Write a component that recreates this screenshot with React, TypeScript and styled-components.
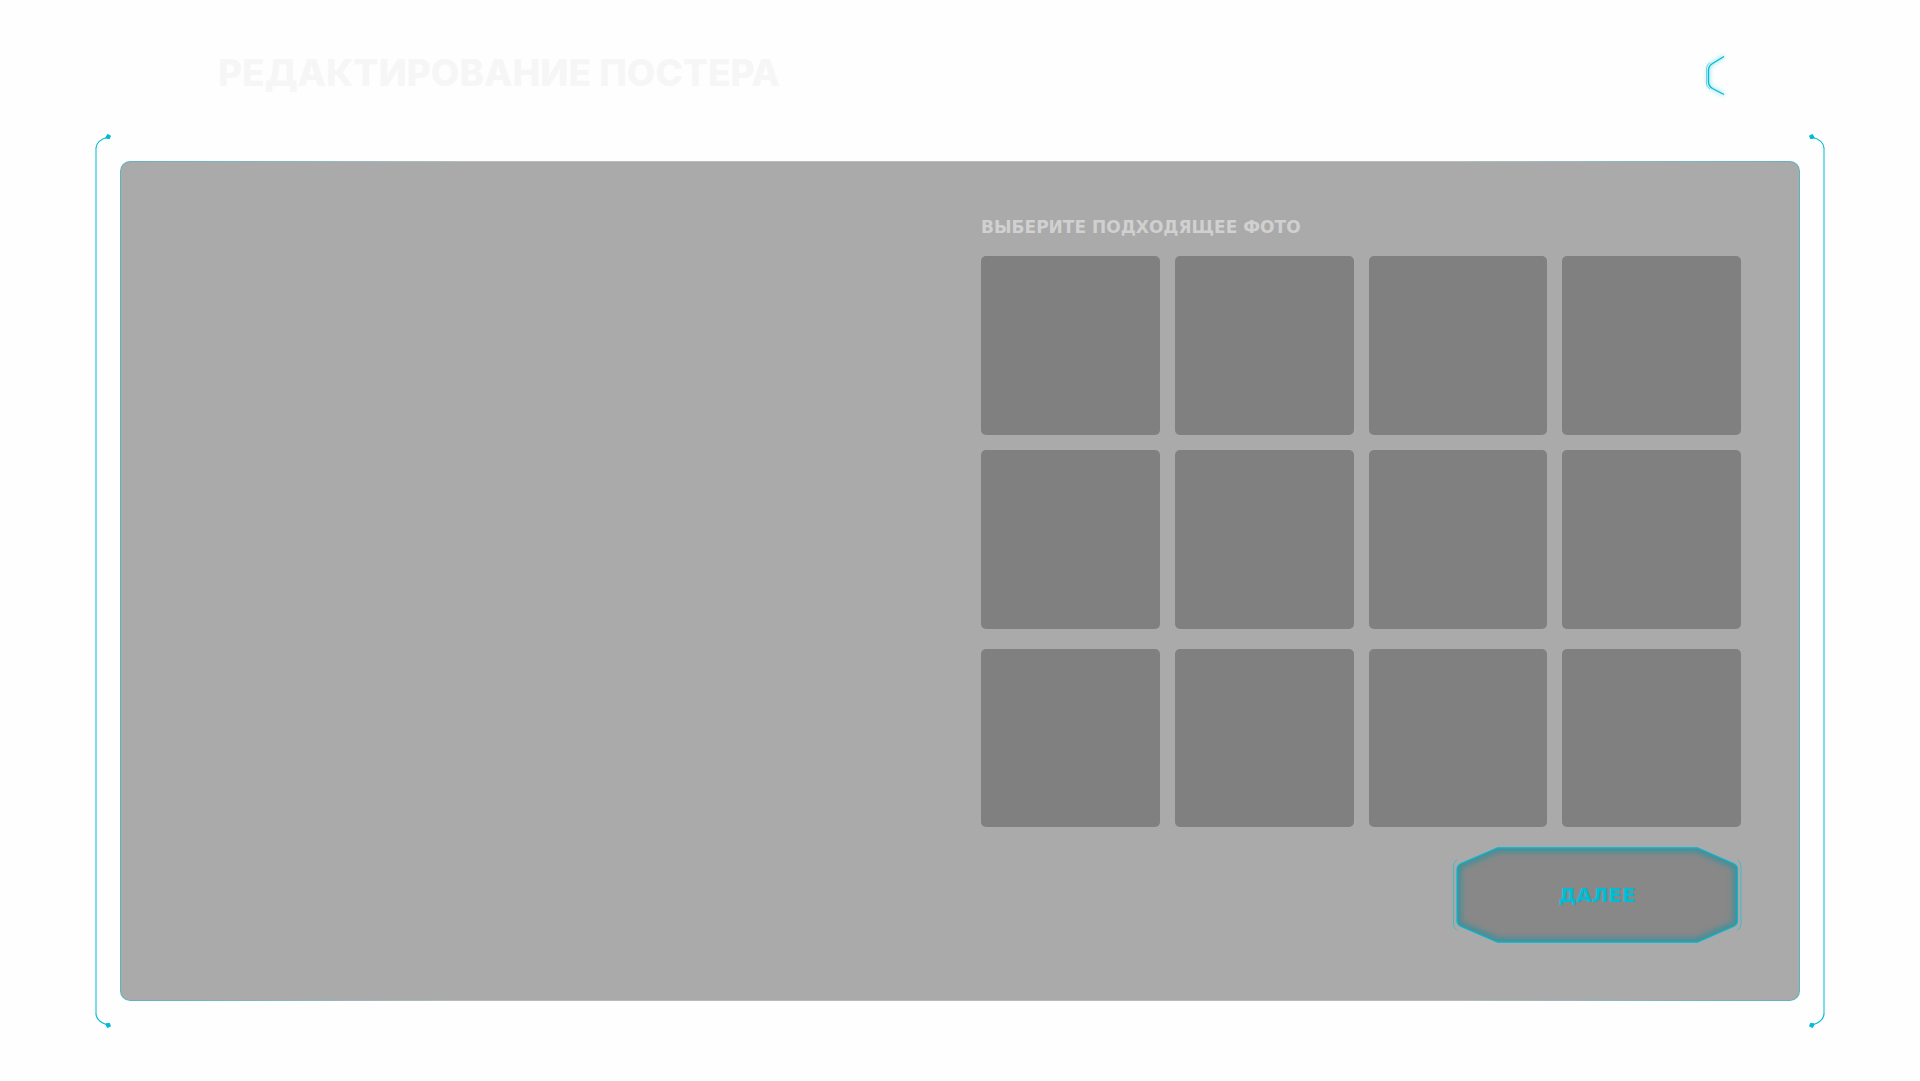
import React from "react";
import styled, { createGlobalStyle } from "styled-components";

const cyan = "#00bcd4";

const GlobalStyle = createGlobalStyle`
  *, *::before, *::after { box-sizing: border-box; }
  body {
    margin: 0;
    background: #fefefe;
    font-family: Inter, "Noto Sans", sans-serif;
  }
`;

const Page = styled.div`
  display: flex;
  flex-direction: column;
  min-height: 100vh;
  padding: 48px 95px 52px;
`;

const Header = styled.header`
  display: flex;
  align-items: flex-start;
  justify-content: space-between;
  height: 56px;
  padding: 0 93px 0 123px;
`;

const Title = styled.h1`
  margin: 0;
  color: #f6f6f6;
  font-size: 37px;
  font-weight: 800;
  line-height: 50px;
`;

const BackButton = styled.button`
  display: flex;
  width: 28px;
  height: 56px;
  padding: 0;
  border: 0;
  background: none;
  cursor: pointer;
  svg { overflow: visible; }
`;

const Frame = styled.main`
  display: flex;
  gap: 8px;
  margin-top: 29px;
`;

const BracketColumn = styled.div<{ $right?: boolean }>`
  display: flex;
  flex: none;
  flex-direction: column;
  width: 17px;
  transform: ${(p) => (p.$right ? "scaleX(-1)" : "none")};
`;

const BracketLine = styled.div`
  flex: 1;
  width: 2px;
  background: ${cyan};
  opacity: 0.5;
`;

const Cap = styled.svg<{ $flip?: boolean }>`
  display: block;
  flex: none;
  transform: ${(p) => (p.$flip ? "scaleY(-1)" : "none")};
`;

const Panel = styled.div`
  display: flex;
  flex: 1;
  justify-content: flex-end;
  margin: 28px 0;
  padding: 56px 58px 57px;
  border: 1px solid transparent;
  border-radius: 10px;
  background:
    linear-gradient(#aaa, #aaa) padding-box,
    linear-gradient(90deg, #5db3bf, #b4bcbc 20%, #b4bcbc 80%, #5db3bf) border-box;
`;

const Poster = styled.section`
  flex: 1;
`;

const Picker = styled.section`
  display: flex;
  flex-direction: column;
  gap: 20px;
  width: 760px;
  max-width: 100%;
`;

const Caption = styled.h2`
  margin: 0;
  color: #d0d0d0;
  font-family: "DejaVu Sans", sans-serif;
  font-size: 17px;
  font-weight: 700;
  line-height: 18px;
`;

const PhotoGrid = styled.div`
  display: grid;
  grid-template-columns: repeat(4, 1fr);
  gap: 15px;
`;

const Photo = styled.button`
  aspect-ratio: 1;
  padding: 0;
  border: 0;
  border-radius: 5px;
  background: #808080;
  cursor: pointer;
`;

const NextButton = styled.button`
  display: grid;
  align-self: flex-end;
  place-items: center;
  width: 288px;
  height: 96px;
  padding: 0;
  border: 0;
  background: none;
  color: ${cyan};
  font-family: "DejaVu Sans", sans-serif;
  font-size: 20px;
  font-weight: 700;
  line-height: 24px;
  cursor: pointer;
  > * { grid-area: 1 / 1; }
  > span { z-index: 1; }
  svg { overflow: visible; }
`;

function BracketCap({ flip }: { flip?: boolean }) {
  return (
    <Cap $flip={flip} width="17" height="16" viewBox="0 0 17 16" aria-hidden="true">
      <path d="M1 16V15C1.500 9 6 6 13 4" fill="none" stroke={cyan} strokeWidth="1.200" />
      <path d="m12.500 1.500 2.900 1.300-.9 2.900-3.700-.6z" fill={cyan} stroke={cyan} />
    </Cap>
  );
}

function Bracket({ right }: { right?: boolean }) {
  return (
    <BracketColumn $right={right}>
      <BracketCap />
      <BracketLine />
      <BracketCap flip />
    </BracketColumn>
  );
}

const hexagon =
  "M44.500.8H244.500L280.500 16.500Q284.500 18.500 284.500 22V74Q284.500 77.500 280.500 79.500L244.500 95.200H44.500L8 79.500Q4 77.500 4 74V22Q4 18.500 8 16.500Z";

function NextShape() {
  return (
    <svg width="288" height="96" viewBox="0 0 288 96" aria-hidden="true">
      <defs>
        <clipPath id="next-clip"><path d={hexagon} /></clipPath>
        <filter id="next-glow" x="-10%" y="-20%" width="120%" height="140%" colorInterpolationFilters="sRGB">
          <feGaussianBlur stdDeviation="2.5" />
        </filter>
      </defs>
      <path d={hexagon} fill="#888" />
      <g clipPath="url(#next-clip)">
        <path d={hexagon} fill="none" stroke="#1f93a2" strokeOpacity=".6" strokeWidth="10" filter="url(#next-glow)" />
      </g>
      <path d={hexagon} fill="none" stroke={cyan} strokeWidth="1.200" />
      <path d="M4 12.500Q.5 15 .5 19V77Q.5 81 4 83.500M284.500 12.500Q288 15 288 19V77Q288 81 284.500 83.500" fill="none" stroke={cyan} strokeWidth=".9" opacity=".6" />
    </svg>
  );
}

function BackShape() {
  return (
    <svg width="28" height="56" viewBox="0 0 28 56" aria-hidden="true">
      <defs>
        <filter id="back-glow" x="-50%" y="-30%" width="200%" height="160%" colorInterpolationFilters="sRGB">
          <feGaussianBlur stdDeviation="2" />
        </filter>
      </defs>
      <path d="M20 8.500 8.500 15.500Q4.500 18 4.500 22V34Q4.500 38 8.500 40.500L20 46.500" fill="none" stroke={cyan} strokeWidth="3" opacity=".4" filter="url(#back-glow)" />
      <path d="M20 8.500 8.500 15.500Q4.500 18 4.500 22V34Q4.500 38 8.500 40.500L20 46.500" fill="none" stroke={cyan} strokeWidth="1.400" />
      <path d="M6 14.500Q2.500 17 2.500 20V36Q2.500 39 6 41" fill="none" stroke={cyan} strokeWidth=".9" opacity=".6" />
    </svg>
  );
}

function Photos({ first, count }: { first: number; count: number }) {
  return (
    <PhotoGrid>
      {Array.from({ length: count }, (_, i) => (
        <Photo key={i} type="button" aria-label={`Фото ${first + i}`} />
      ))}
    </PhotoGrid>
  );
}

export default function App() {
  return (
    <>
      <GlobalStyle />
      <Page>
        <Header>
          <Title>РЕДАКТИРОВАНИЕ ПОСТЕРА</Title>
          <BackButton type="button" aria-label="Назад"><BackShape /></BackButton>
        </Header>
        <Frame>
          <Bracket />
          <Panel>
            <Poster aria-label="Постер" />
            <Picker>
              <Caption>ВЫБЕРИТЕ ПОДХОДЯЩЕЕ ФОТО</Caption>
              <Photos first={1} count={8} />
              <Photos first={9} count={4} />
              <NextButton type="button">
                <NextShape />
                <span>ДАЛЕЕ</span>
              </NextButton>
            </Picker>
          </Panel>
          <Bracket right />
        </Frame>
      </Page>
    </>
  );
}
